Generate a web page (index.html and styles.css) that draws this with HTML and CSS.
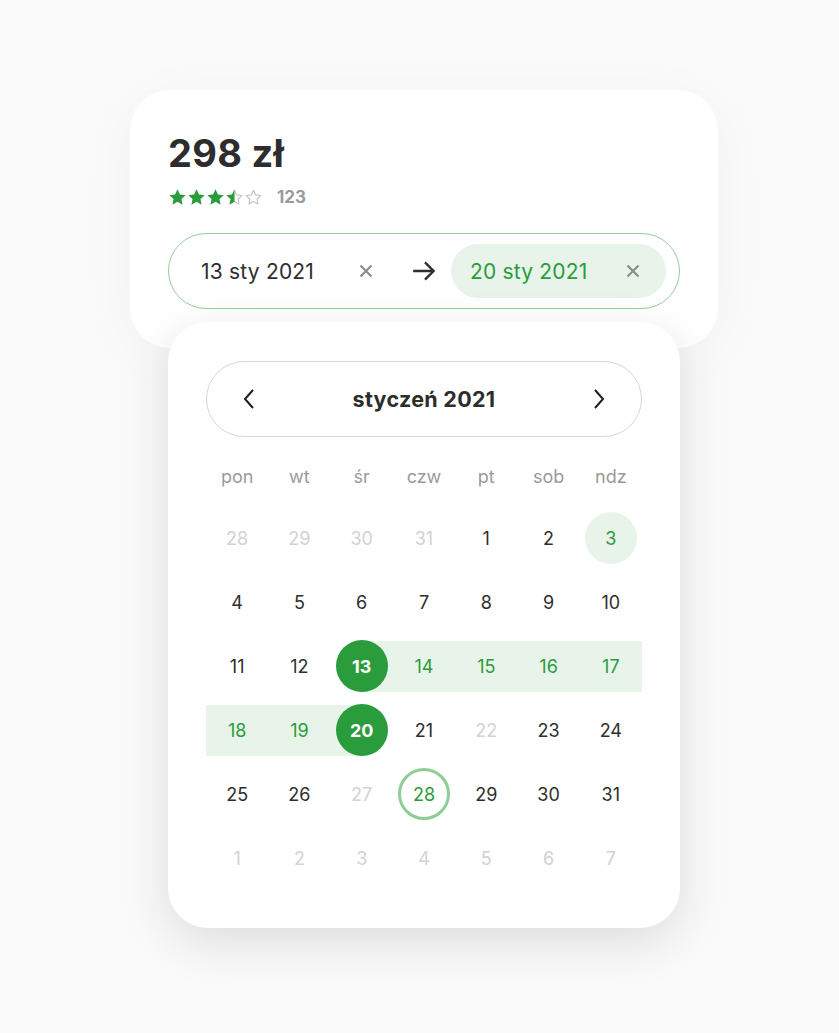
FILE: index.html
```html
<!DOCTYPE html>
<html lang="pl">
<head>
<meta charset="utf-8">
<title>Kalendarz</title>
<link rel="stylesheet" href="styles.css">
</head>
<body>
<div class="stage">
  <section class="product">
    <h1 class="price">298 zł</h1>
    <div class="rating">
      <div class="stars">
        <svg class="star" viewBox="0 0 24 24"><path class="full" d="M12 1.5l3.1 6.6 7.2.9-5.3 4.9 1.4 7.1L12 17.5l-6.4 3.5 1.4-7.1-5.3-4.9 7.2-.9z"/></svg>
        <svg class="star" viewBox="0 0 24 24"><path class="full" d="M12 1.5l3.1 6.6 7.2.9-5.3 4.9 1.4 7.1L12 17.5l-6.4 3.5 1.4-7.1-5.3-4.9 7.2-.9z"/></svg>
        <svg class="star" viewBox="0 0 24 24"><path class="full" d="M12 1.5l3.1 6.6 7.2.9-5.3 4.9 1.4 7.1L12 17.5l-6.4 3.5 1.4-7.1-5.3-4.9 7.2-.9z"/></svg>
        <svg class="star" viewBox="0 0 24 24"><defs><clipPath id="lh"><rect x="0" y="0" width="12" height="24"/></clipPath><clipPath id="rh"><rect x="12" y="0" width="12" height="24"/></clipPath></defs><path class="empty" clip-path="url(#rh)" d="M12 2.8l2.8 5.9 6.4.8-4.7 4.4 1.2 6.3L12 17.1l-5.7 3.1 1.2-6.3-4.7-4.4 6.4-.8z"/><path class="full" clip-path="url(#lh)" d="M12 1.5l3.1 6.6 7.2.9-5.3 4.9 1.4 7.1L12 17.5l-6.4 3.5 1.4-7.1-5.3-4.9 7.2-.9z"/></svg>
        <svg class="star" viewBox="0 0 24 24"><path class="empty" d="M12 2.8l2.8 5.9 6.4.8-4.7 4.4 1.2 6.3L12 17.1l-5.7 3.1 1.2-6.3-4.7-4.4 6.4-.8z"/></svg>
      </div>
      <span class="count">123</span>
    </div>
    <div class="range-input">
      <div class="field">
        <span class="field-text">13 sty 2021</span>
        <svg class="clear" viewBox="0 0 16 16"><path d="M2.5 2.5l11 11M13.5 2.5l-11 11"/></svg>
      </div>
      <svg class="arrow" viewBox="0 0 24 24"><path d="M2 12h19M13 4l8 8-8 8"/></svg>
      <div class="field field-active">
        <span class="field-text">20 sty 2021</span>
        <svg class="clear" viewBox="0 0 16 16"><path d="M2.5 2.5l11 11M13.5 2.5l-11 11"/></svg>
      </div>
    </div>
  </section>

  <section class="calendar">
    <div class="month-nav">
      <svg class="chev" viewBox="0 0 12 22"><path d="M10 2L2 11l8 9"/></svg>
      <span class="month">styczeń 2021</span>
      <svg class="chev" viewBox="0 0 12 22"><path d="M2 2l8 9-8 9"/></svg>
    </div>
    <div class="grid">
      <div class="wd">pon</div><div class="wd">wt</div><div class="wd">śr</div><div class="wd">czw</div><div class="wd">pt</div><div class="wd">sob</div><div class="wd">ndz</div>

      <div class="day muted"><span>28</span></div>
      <div class="day muted"><span>29</span></div>
      <div class="day muted"><span>30</span></div>
      <div class="day muted"><span>31</span></div>
      <div class="day"><span>1</span></div>
      <div class="day"><span>2</span></div>
      <div class="day today"><span>3</span></div>

      <div class="day"><span>4</span></div>
      <div class="day"><span>5</span></div>
      <div class="day"><span>6</span></div>
      <div class="day"><span>7</span></div>
      <div class="day"><span>8</span></div>
      <div class="day"><span>9</span></div>
      <div class="day"><span>10</span></div>

      <div class="day"><span>11</span></div>
      <div class="day"><span>12</span></div>
      <div class="day sel start"><span>13</span></div>
      <div class="day inrange"><span>14</span></div>
      <div class="day inrange"><span>15</span></div>
      <div class="day inrange"><span>16</span></div>
      <div class="day inrange"><span>17</span></div>

      <div class="day inrange"><span>18</span></div>
      <div class="day inrange"><span>19</span></div>
      <div class="day sel end"><span>20</span></div>
      <div class="day"><span>21</span></div>
      <div class="day muted"><span>22</span></div>
      <div class="day"><span>23</span></div>
      <div class="day"><span>24</span></div>

      <div class="day"><span>25</span></div>
      <div class="day"><span>26</span></div>
      <div class="day muted"><span>27</span></div>
      <div class="day hover"><span>28</span></div>
      <div class="day"><span>29</span></div>
      <div class="day"><span>30</span></div>
      <div class="day"><span>31</span></div>

      <div class="day muted"><span>1</span></div>
      <div class="day muted"><span>2</span></div>
      <div class="day muted"><span>3</span></div>
      <div class="day muted"><span>4</span></div>
      <div class="day muted"><span>5</span></div>
      <div class="day muted"><span>6</span></div>
      <div class="day muted"><span>7</span></div>
    </div>
  </section>
</div>
</body>
</html>
```

FILE: styles.css
```css
* { box-sizing: border-box; }

html, body {
  margin: 0;
  background: #fafafa;
  font-family: "Inter", "Noto Sans", sans-serif;
  color: #2e2e2e;
}

.stage {
  padding: 90px 0 0 130px;
  width: 839px;
  height: 1033px;
}

.product {
  width: 588px;
  padding: 39px 38px 38px;
  background: #fff;
  border-radius: 40px;
  box-shadow: 0 10px 60px rgba(0, 0, 0, 0.035);
  height: 258px;
}

.price {
  margin: 0;
  font-size: 38px;
  line-height: 48px;
  font-weight: 700;
  letter-spacing: 0.3px;
  color: #2d2d2d;
}

.rating {
  display: flex;
  align-items: center;
  margin-top: 8px;
  height: 24px;
}

.stars {
  display: flex;
  gap: 0;
}

.star {
  width: 19px;
  height: 19px;
  display: block;
}

.star .full { fill: #2a9c3b; }
.star .empty { fill: none; stroke: #c4c4c4; stroke-width: 1.5; stroke-linejoin: round; }

.count {
  margin-left: 14px;
  font-size: 17px;
  font-weight: 700;
  color: #9a9a9a;
}

.range-input {
  margin-top: 24px;
  height: 76px;
  border: 1px solid #93cf9a;
  border-radius: 38px;
  display: flex;
  align-items: center;
  padding: 0 13px 0 32px;
}

.field {
  display: flex;
  align-items: center;
  justify-content: space-between;
  width: 174px;
}

.field-text {
  font-size: 21px;
  color: #2e2e2e;
  letter-spacing: 0.2px;
}

.clear {
  width: 16px;
  height: 16px;
  display: block;
}

.clear path {
  fill: none;
  stroke: #8c8c8c;
  stroke-width: 2.2;
}

.arrow {
  width: 26px;
  height: 26px;
  margin: 0 14px 0 37px;
  display: block;
}

.arrow path {
  fill: none;
  stroke: #2e2e2e;
  stroke-width: 2.2;
}

.field-active {
  width: 216px;
  height: 54px;
  border-radius: 27px;
  background: #e8f4e9;
  padding: 0 25px 0 19px;
}

.field-active .field-text { color: #2a9c3b; }

.calendar {
  position: relative;
  width: 512px;
  margin: -26px 0 0 38px;
  padding: 39px 38px 38px;
  background: #fff;
  border-radius: 40px;
  box-shadow: 0 14px 50px rgba(0, 0, 0, 0.12);
}

.month-nav {
  height: 76px;
  border: 1px solid #d6d6d6;
  border-radius: 38px;
  display: flex;
  align-items: center;
  justify-content: space-between;
  padding: 0 36px;
}

.chev {
  width: 12px;
  height: 22px;
  display: block;
}

.chev path {
  fill: none;
  stroke: #1e1e1e;
  stroke-width: 2;
}

.month {
  font-size: 21.5px;
  font-weight: 700;
  letter-spacing: 0.3px;
  color: #2d2d2d;
}

.grid {
  margin-top: 9px;
  display: grid;
  grid-template-columns: repeat(7, 1fr);
  grid-template-rows: 60px repeat(6, 64px);
}

.wd {
  display: flex;
  align-items: center;
  justify-content: center;
  font-size: 18px;
  color: #9a9a9a;
}

.day {
  display: flex;
  align-items: center;
  justify-content: center;
  font-size: 18px;
  color: #2e2e2e;
  background-repeat: no-repeat;
  background-position: left center;
  background-size: calc(100% + 1px) 51px;
}

.day span {
  width: 52px;
  height: 52px;
  border-radius: 50%;
  display: flex;
  align-items: center;
  justify-content: center;
}

.muted { color: #d2d2d2; }

.today span {
  background: #e8f4e9;
  color: #2a9c3b;
}

.inrange {
  color: #2a9c3b;
  background-image: linear-gradient(#e8f4e9, #e8f4e9);
}

.sel span {
  background: #2a9c3b;
  color: #fff;
  font-weight: 700;
}

.start { background-image: linear-gradient(to right, transparent 50%, #e8f4e9 50%); }
.end { background-image: linear-gradient(to right, #e8f4e9 50%, transparent 50%); }

.hover span {
  border: 3px solid #8fcd97;
  color: #2a9c3b;
}
```
